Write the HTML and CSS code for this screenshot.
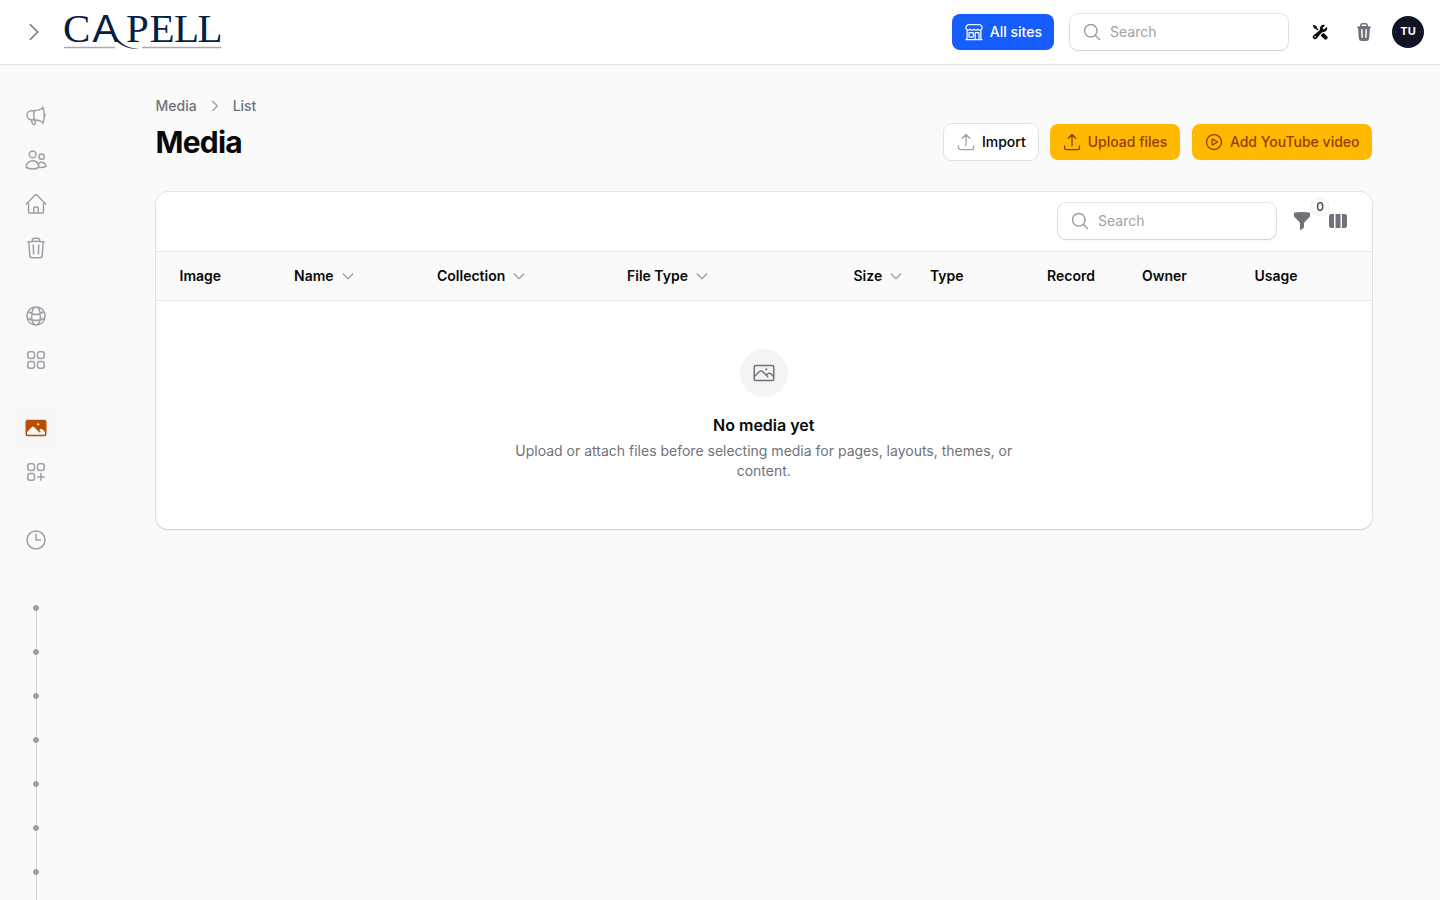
FILE: index.html
```html
<!DOCTYPE html>
<html lang="en">
<head>
    <meta charset="utf-8">
    <title>Media - Capell</title>
    <link rel="stylesheet" href="styles.css">
</head>
<body>
    <header class="topbar">
        <button class="icon-btn expand" aria-label="Expand sidebar">
            <svg class="icon lg" viewBox="0 0 24 24"><path d="m8.25 4.5 7.5 7.5-7.5 7.5"/></svg>
        </button>
        <a class="logo" href="#">
            <svg width="164" height="40" viewBox="0 0 164 40">
                <text y="30" x="0">C</text>
                <text y="30" x="29.500" class="logo-a">A</text>
                <text y="30" x="63 86.500 111 134.500">PELL</text>
                <path class="swoosh" d="M50 18.500c5 11 11 17.500 26 18.500-13 .5-21.500-5-27.500-14z"/>
                <path class="rule" d="M1 35.500h51M79 35.500h79.500"/>
            </svg>
        </a>
        <div class="topbar-end">
            <a class="btn blue" href="#">
                <svg class="icon" viewBox="0 0 24 24"><path d="M13.500 21v-7.500a.75.75 0 0 1 .75-.75h3a.75.75 0 0 1 .75.75V21m-4.500 0H2.360m11.140 0H18m0 0h3.640m-1.390 0V9.349M3.750 21V9.349m0 0a3.001 3.001 0 0 0 3.750-.615A2.993 2.993 0 0 0 9.750 9.750c.896 0 1.700-.393 2.250-1.016a2.993 2.993 0 0 0 2.250 1.016c.896 0 1.700-.393 2.250-1.015a3.001 3.001 0 0 0 3.750.614m-16.500 0a3.004 3.004 0 0 1-.621-4.720l1.189-1.190A1.500 1.500 0 0 1 5.378 3h13.243a1.500 1.500 0 0 1 1.060.440l1.190 1.189a3 3 0 0 1-.621 4.720M6.750 18h3.750a.75.75 0 0 0 .75-.75V13.500a.75.75 0 0 0-.75-.75H6.750a.75.75 0 0 0-.75.75v3.750c0 .414.336.75.75.75Z"/></svg>
                All sites
            </a>
            <label class="search">
                <svg class="icon" viewBox="0 0 24 24"><path d="m21 21-5.197-5.197m0 0A7.500 7.500 0 1 0 5.196 5.196a7.500 7.500 0 0 0 10.607 10.607Z"/></svg>
                <input type="text" placeholder="Search">
            </label>
            <div class="tools">
                <svg class="icon solid sm" viewBox="0 0 20 20"><path fill-rule="evenodd" d="M14.500 10a4.500 4.500 0 0 0 4.284-5.882c-.105-.324-.51-.391-.752-.15L15.340 6.660a.454.454 0 0 1-.493.11 3.010 3.010 0 0 1-1.618-1.616.455.455 0 0 1 .11-.494l2.694-2.692c.24-.241.174-.647-.15-.752a4.500 4.500 0 0 0-5.873 4.575c.055.873-.128 1.808-.8 2.368l-7.230 6.024a2.724 2.724 0 1 0 3.837 3.837l6.024-7.230c.56-.672 1.495-.855 2.368-.8.096.007.193.01.291.01ZM5 16a1 1 0 1 1-2 0 1 1 0 0 1 2 0Z"/><path d="M14.500 11.500c.173 0 .345-.007.514-.022l3.754 3.754a2.500 2.500 0 0 1-3.536 3.536l-4.410-4.410 2.172-2.607c.052-.063.147-.138.342-.196.202-.06.469-.087.777-.067.128.008.257.012.387.012ZM6 4.586l2.330 2.330a.452.452 0 0 1-.08.09L6.800 8.214 4.586 6H3.309a.5.5 0 0 1-.447-.276l-1.700-3.402a.5.5 0 0 1 .093-.577l.49-.49a.5.5 0 0 1 .577-.094l3.402 1.700A.5.5 0 0 1 6 3.310v1.277Z"/></svg>
                <svg class="icon solid muted" viewBox="0 0 20 20"><path fill-rule="evenodd" d="M8.750 1A2.750 2.750 0 0 0 6 3.750v.443c-.795.077-1.584.176-2.365.298a.75.75 0 1 0 .23 1.482l.149-.022.841 10.518A2.750 2.750 0 0 0 7.596 19h4.807a2.750 2.750 0 0 0 2.742-2.530l.841-10.520.149.023a.75.75 0 0 0 .23-1.482A41.030 41.030 0 0 0 14 4.193V3.750A2.750 2.750 0 0 0 11.250 1h-2.500ZM10 4c.84 0 1.673.025 2.500.075V3.750c0-.69-.56-1.250-1.250-1.250h-2.500c-.69 0-1.250.56-1.250 1.250v.325C8.327 4.025 9.160 4 10 4ZM8.580 7.720a.75.75 0 0 0-1.500.06l.3 7.500a.75.75 0 1 0 1.500-.06l-.3-7.500Zm4.340.06a.75.75 0 1 0-1.500-.06l-.3 7.500a.75.75 0 1 0 1.500.06l.3-7.500Z"/></svg>
            </div>
            <span class="avatar">TU</span>
        </div>
    </header>

    <div class="layout">
        <nav class="sidebar">
            <div class="group">
                <a href="#"><svg class="icon lg" viewBox="0 0 24 24"><path d="M10.340 15.840c-.688-.06-1.386-.09-2.090-.09H7.500a4.500 4.500 0 1 1 0-9h.75c.704 0 1.402-.03 2.090-.09m0 9.180c.253.962.584 1.892.985 2.783.247.55.06 1.210-.463 1.511l-.657.38c-.551.318-1.260.117-1.527-.461a20.845 20.845 0 0 1-1.440-4.282m3.102.069a18.030 18.030 0 0 1-.59-4.590c0-1.586.205-3.124.59-4.590m0 9.180a23.848 23.848 0 0 1 8.835 2.535M10.340 6.660a23.847 23.847 0 0 0 8.835-2.535m0 0A23.740 23.740 0 0 0 18.795 3m.38 1.125a23.910 23.910 0 0 1 1.014 5.395m-1.014 8.855c-.118.38-.245.754-.38 1.125m.38-1.125a23.910 23.910 0 0 0 1.014-5.395m0-3.460c.495.413.811 1.035.811 1.730 0 .695-.316 1.317-.811 1.730m0-3.460a24.347 24.347 0 0 1 0 3.460"/></svg></a>
                <a href="#"><svg class="icon lg" viewBox="0 0 24 24"><path d="M15 19.128a9.380 9.380 0 0 0 2.625.372 9.337 9.337 0 0 0 4.121-.952 4.125 4.125 0 0 0-7.533-2.493M15 19.128v-.003c0-1.113-.285-2.160-.786-3.070M15 19.128v.106A12.318 12.318 0 0 1 8.624 21c-2.331 0-4.512-.645-6.374-1.766l-.001-.109a6.375 6.375 0 0 1 11.964-3.070M12 6.375a3.375 3.375 0 1 1-6.750 0 3.375 3.375 0 0 1 6.750 0Zm8.250 2.250a2.625 2.625 0 1 1-5.250 0 2.625 2.625 0 0 1 5.250 0Z"/></svg></a>
                <a href="#"><svg class="icon lg" viewBox="0 0 24 24"><path d="m2.250 12 8.954-8.955c.44-.439 1.152-.439 1.591 0L21.750 12M4.500 9.750v10.125c0 .621.504 1.125 1.125 1.125H9.750v-4.875c0-.621.504-1.125 1.125-1.125h2.250c.621 0 1.125.504 1.125 1.125V21h4.125c.621 0 1.125-.504 1.125-1.125V9.750M8.250 21h8.250"/></svg></a>
                <a href="#"><svg class="icon lg" viewBox="0 0 24 24"><path d="m14.740 9-.346 9m-4.788 0L9.260 9m9.968-3.210c.342.052.682.107 1.022.166m-1.022-.165L18.160 19.673a2.250 2.250 0 0 1-2.244 2.077H8.084a2.250 2.250 0 0 1-2.244-2.077L4.772 5.790m14.456 0a48.108 48.108 0 0 0-3.478-.397m-12 .562c.34-.059.68-.114 1.022-.165m0 0a48.110 48.110 0 0 1 3.478-.397m7.500 0v-.916c0-1.180-.91-2.164-2.090-2.201a51.964 51.964 0 0 0-3.320 0c-1.180.037-2.090 1.022-2.090 2.201v.916m7.500 0a48.667 48.667 0 0 0-7.500 0"/></svg></a>
            </div>
            <div class="group">
                <a href="#"><svg class="icon lg" viewBox="0 0 24 24"><path d="M12 21a9.004 9.004 0 0 0 8.716-6.747M12 21a9.004 9.004 0 0 1-8.716-6.747M12 21c2.485 0 4.500-4.030 4.500-9S14.485 3 12 3m0 18c-2.485 0-4.500-4.030-4.500-9S9.515 3 12 3m0 0a8.997 8.997 0 0 1 7.843 4.582M12 3a8.997 8.997 0 0 0-7.843 4.582m15.686 0A11.953 11.953 0 0 1 12 10.500c-2.998 0-5.740-1.100-7.843-2.918m15.686 0A8.959 8.959 0 0 1 21 12c0 .778-.099 1.533-.284 2.253m0 0A17.919 17.919 0 0 1 12 16.500c-3.162 0-6.133-.815-8.716-2.247m0 0A9.015 9.015 0 0 1 3 12c0-1.605.42-3.113 1.157-4.418"/></svg></a>
                <a href="#"><svg class="icon lg" viewBox="0 0 24 24"><rect x="3.750" y="3.750" width="6.750" height="6.750" rx="2.200"/><rect x="13.500" y="3.750" width="6.750" height="6.750" rx="2.200"/><rect x="3.750" y="13.500" width="6.750" height="6.750" rx="2.200"/><rect x="13.500" y="13.500" width="6.750" height="6.750" rx="2.200"/></svg></a>
            </div>
            <div class="group">
                <a href="#" class="active"><svg class="icon solid lg" viewBox="0 0 24 24"><path fill-rule="evenodd" d="M1.500 6a2.250 2.250 0 0 1 2.250-2.250h16.500A2.250 2.250 0 0 1 22.500 6v12a2.250 2.250 0 0 1-2.250 2.250H3.750A2.250 2.250 0 0 1 1.500 18V6ZM3 16.060V18c0 .414.336.75.75.75h16.500A.75.75 0 0 0 21 18v-1.940l-2.690-2.689a1.500 1.500 0 0 0-2.120 0l-.88.879.97.97a.75.75 0 1 1-1.060 1.060l-5.160-5.159a1.500 1.500 0 0 0-2.120 0L3 16.061Zm10.125-7.810a1.125 1.125 0 1 1 2.250 0 1.125 1.125 0 0 1-2.250 0Z"/></svg></a>
                <a href="#"><svg class="icon lg" viewBox="0 0 24 24"><rect x="3.750" y="3.750" width="6.750" height="6.750" rx="2.200"/><rect x="13.500" y="3.750" width="6.750" height="6.750" rx="2.200"/><rect x="3.750" y="13.500" width="6.750" height="6.750" rx="2.200"/><path d="M13.500 16.875h6.750M16.875 13.500v6.750"/></svg></a>
            </div>
            <div class="group">
                <a href="#"><svg class="icon lg" viewBox="0 0 24 24"><path d="M12 6v6h4.500m4.500 0a9 9 0 1 1-18 0 9 9 0 0 1 18 0Z"/></svg></a>
            </div>
            <div class="group dots">
                <a href="#"></a>
                <a href="#"></a>
                <a href="#"></a>
                <a href="#"></a>
                <a href="#"></a>
                <a href="#"></a>
                <a href="#"></a>
                <a href="#"></a>
            </div>
        </nav>

        <main>
            <div class="page-header">
                <div>
                    <div class="breadcrumbs">
                        <a href="#">Media</a>
                        <svg class="icon sm" viewBox="0 0 24 24"><path d="m8.500 5 7 7-7 7"/></svg>
                        <span>List</span>
                    </div>
                    <h1>Media</h1>
                </div>
                <div class="actions">
                    <button class="btn white">
                        <svg class="icon" viewBox="0 0 24 24"><path d="M3 16.500v2.250A2.250 2.250 0 0 0 5.250 21h13.500A2.250 2.250 0 0 0 21 18.750V16.500m-13.500-9L12 3m0 0 4.500 4.500M12 3v13.500"/></svg>
                        Import
                    </button>
                    <button class="btn amber">
                        <svg class="icon" viewBox="0 0 24 24"><path d="M3 16.500v2.250A2.250 2.250 0 0 0 5.250 21h13.500A2.250 2.250 0 0 0 21 18.750V16.500m-13.500-9L12 3m0 0 4.500 4.500M12 3v13.500"/></svg>
                        Upload files
                    </button>
                    <button class="btn amber">
                        <svg class="icon" viewBox="0 0 24 24"><path d="M21 12a9 9 0 1 1-18 0 9 9 0 0 1 18 0Z"/><path d="M15.910 11.672a.375.375 0 0 1 0 .656l-5.603 3.113a.375.375 0 0 1-.557-.328V8.887c0-.286.307-.466.557-.327l5.603 3.112Z"/></svg>
                        Add YouTube video
                    </button>
                </div>
            </div>

            <section class="card">
                <div class="toolbar">
                    <label class="search">
                        <svg class="icon" viewBox="0 0 24 24"><path d="m21 21-5.197-5.197m0 0A7.500 7.500 0 1 0 5.196 5.196a7.500 7.500 0 0 0 10.607 10.607Z"/></svg>
                        <input type="text" placeholder="Search">
                    </label>
                    <button class="icon-btn filter">
                        <svg class="icon solid muted" viewBox="0 0 20 20"><path d="M2.628 1.601C5.028 1.206 7.490 1 10 1s4.973.206 7.372.601a.75.75 0 0 1 .628.74v2.288a2.250 2.250 0 0 1-.659 1.590l-4.682 4.683a2.250 2.250 0 0 0-.659 1.590v3.037c0 .684-.31 1.330-.844 1.757l-1.937 1.550A.75.75 0 0 1 8 18.250v-5.757a2.250 2.250 0 0 0-.659-1.591L2.659 6.220A2.250 2.250 0 0 1 2 4.629V2.340a.75.75 0 0 1 .628-.74Z"/></svg>
                        <span class="badge">0</span>
                    </button>
                    <button class="icon-btn">
                        <svg class="icon solid muted" viewBox="0 0 20 20"><path d="M14 17h2.750A2.250 2.250 0 0 0 19 14.750v-9.500A2.250 2.250 0 0 0 16.750 3H14v14ZM12.500 3h-5v14h5V3ZM3.250 3H6v14H3.250A2.250 2.250 0 0 1 1 14.750v-9.500A2.250 2.250 0 0 1 3.250 3Z"/></svg>
                    </button>
                </div>
                <div class="columns">
                    <div>Image</div>
                    <div>Name <svg class="icon sm" viewBox="0 0 24 24"><path d="m19 9-7 7-7-7"/></svg></div>
                    <div>Collection <svg class="icon sm" viewBox="0 0 24 24"><path d="m19 9-7 7-7-7"/></svg></div>
                    <div>File Type <svg class="icon sm" viewBox="0 0 24 24"><path d="m19 9-7 7-7-7"/></svg></div>
                    <div>Size <svg class="icon sm" viewBox="0 0 24 24"><path d="m19 9-7 7-7-7"/></svg></div>
                    <div>Type</div>
                    <div>Record</div>
                    <div>Owner</div>
                    <div>Usage</div>
                </div>
                <div class="empty">
                    <div class="empty-icon">
                        <svg class="icon lg" viewBox="0 0 24 24"><path d="m2.250 15.750 5.159-5.159a2.250 2.250 0 0 1 3.182 0l5.159 5.159m-1.500-1.500 1.409-1.409a2.250 2.250 0 0 1 3.182 0l2.909 2.909m-18 3.750h16.500a1.500 1.500 0 0 0 1.500-1.500V6a1.500 1.500 0 0 0-1.500-1.500H3.750A1.500 1.500 0 0 0 2.250 6v12a1.500 1.500 0 0 0 1.500 1.500Zm10.500-11.250h.008v.008h-.008V8.250Zm.375 0a.375.375 0 1 1-.75 0 .375.375 0 0 1 .75 0Z"/></svg>
                    </div>
                    <h2>No media yet</h2>
                    <p>Upload or attach files before selecting media for pages, layouts, themes, or content.</p>
                </div>
            </section>
        </main>
    </div>
</body>
</html>
```

FILE: styles.css
```css
* {
    box-sizing: border-box;
}
body {
    margin: 0;
    height: 100vh;
    overflow: hidden;
    background: #fafafa;
    color: #09090b;
    font: 14px/20px Inter, sans-serif;
}
a {
    color: inherit;
    text-decoration: none;
}
button, input {
    font: inherit;
    border: 0;
    padding: 0;
    background: none;
}

.icon {
    display: block;
    flex: none;
    width: 20px;
    height: 20px;
    fill: none;
    stroke: currentColor;
    stroke-width: 1.5;
    stroke-linecap: round;
    stroke-linejoin: round;
}
.icon.sm {
    width: 16px;
    height: 16px;
    stroke-width: 2;
}
.icon.lg {
    width: 24px;
    height: 24px;
}
.icon.solid {
    fill: currentColor;
    stroke: none;
}
.muted {
    color: #71717b;
}

/* Top bar */
.topbar {
    display: flex;
    align-items: center;
    height: 64px;
    padding: 0 16px;
    background: #fff;
    box-shadow: 0 0 0 1px rgba(9, 9, 11, .05), 0 1px 2px rgba(0, 0, 0, .05);
}
.icon-btn {
    display: flex;
    align-items: center;
    justify-content: center;
    width: 36px;
    height: 36px;
    color: #71717b;
}
.logo {
    margin-left: 11px;
}
.logo svg {
    display: block;
}
.logo text {
    font: 41px "Liberation Serif", serif;
    fill: #04213f;
}
.logo .logo-a {
    font: 39px "Liberation Sans", sans-serif;
}
.swoosh {
    fill: #04213f;
}
.rule {
    stroke: #a3adc2;
    stroke-width: 1.5;
}
.topbar-end {
    display: flex;
    align-items: center;
    margin-left: auto;
}
.topbar-end .search {
    margin-left: 16px;
}
.tools {
    display: flex;
    align-items: center;
    gap: 26px;
    margin: 0 18px 0 24px;
}
.avatar {
    width: 32px;
    height: 32px;
    border-radius: 50%;
    background: #0f1524;
    color: #fff;
    font-size: 11px;
    font-weight: 700;
    line-height: 31px;
    text-align: center;
}

.btn {
    display: flex;
    align-items: center;
    gap: 6px;
    height: 36px;
    padding: 0 12px;
    border-radius: 8px;
    font-weight: 500;
}
.btn.blue {
    background: #155dfc;
    color: #fff;
}
.btn.white {
    background: #fff;
    box-shadow: 0 0 0 1px rgba(9, 9, 11, .1);
}
.btn.white .icon {
    color: #9f9fa9;
}
.btn.amber {
    padding-right: 12.5px;
    background: #ffb900;
    color: #973c00;
}

.search {
    display: flex;
    align-items: center;
    gap: 8px;
    width: 218px;
    height: 36px;
    padding: 0 12px;
    border-radius: 8px;
    background: #fff;
    color: #9f9fa9;
    box-shadow: 0 0 0 1px rgba(9, 9, 11, .1), 0 1px 2px rgba(0, 0, 0, .1);
}
.search .icon {
    stroke-width: 1.8;
}
.search input {
    width: 100%;
    min-width: 0;
}
.search input::placeholder {
    color: #9f9fa9;
}

/* Sidebar */
.layout {
    display: flex;
}
.sidebar {
    display: flex;
    flex-direction: column;
    gap: 28px;
    flex: none;
    width: 72px;
    height: 836px;
    overflow: hidden;
    padding: 32px 16px 0;
}
.group {
    display: flex;
    flex-direction: column;
    flex: none;
    gap: 4px;
}
.group a {
    display: flex;
    align-items: center;
    justify-content: center;
    width: 40px;
    height: 40px;
    border-radius: 8px;
    color: #9f9fa9;
}
.group .active {
    background: #f7f7f7;
    color: #bb4d00;
}
.dots {
    gap: 0;
}
.dots a {
    height: 44px;
    border-radius: 0;
    background:
        radial-gradient(circle, #9f9fa9 2.6px, transparent 3.2px) center / 8px 8px no-repeat,
        linear-gradient(#d4d4d8, #d4d4d8) 20px 0 / 1px 100% no-repeat;
}
.dots a:first-child {
    height: 42px;
    background:
        radial-gradient(circle, #9f9fa9 2.6px, transparent 3.2px) center 16px / 8px 8px no-repeat,
        linear-gradient(#d4d4d8, #d4d4d8) 20px 20px / 1px 100% no-repeat;
}

/* Page */
main {
    flex: 1;
    padding: 32px 68px 0 83.5px;
}
.page-header {
    display: flex;
    align-items: flex-end;
    justify-content: space-between;
}
.breadcrumbs {
    display: flex;
    align-items: center;
    gap: 10px;
    margin-bottom: 8px;
    color: #71717b;
    font-weight: 500;
}
.breadcrumbs .icon {
    color: #9f9fa9;
}
h1 {
    margin: 0;
    font-size: 30px;
    line-height: 36px;
    font-weight: 700;
    letter-spacing: -.75px;
}
.actions {
    display: flex;
    gap: 12px;
}

.card {
    margin-top: 32px;
    border-radius: 12px;
    background: #fff;
    box-shadow: 0 0 0 1px rgba(9, 9, 11, .07), 0 1px 2px rgba(0, 0, 0, .12);
}
.toolbar {
    display: flex;
    align-items: center;
    justify-content: flex-end;
    height: 59px;
    padding: 0 16px 1px;
}
.toolbar .search {
    margin-right: 8px;
}
.filter {
    position: relative;
}
.badge {
    position: absolute;
    top: -4px;
    right: -8px;
    width: 16px;
    height: 16px;
    border-radius: 6px;
    background: #fafafa;
    box-shadow: 0 0 0 1px rgba(9, 9, 11, .06);
    color: #3f3f46;
    font-size: 12px;
    font-weight: 500;
    line-height: 16px;
    text-align: center;
}
.columns {
    display: grid;
    grid-template-columns: 126.5px 143px 190px 226.5px 76.5px 117px 95px 112.5px 1fr;
    height: 50px;
    border-top: 1px solid #e4e4e7;
    border-bottom: 1px solid #e4e4e7;
    background: #fafafa;
    font-weight: 600;
}
.columns div {
    display: flex;
    align-items: center;
    gap: 6px;
    padding-left: 12px;
}
.columns div:first-child {
    padding-left: 24px;
}
.columns .icon {
    color: #9f9fa9;
}

.empty {
    display: flex;
    flex-direction: column;
    align-items: center;
    padding: 48px 24px;
    text-align: center;
}
.empty-icon {
    padding: 12px;
    border-radius: 50%;
    background: #f4f4f5;
    color: #71717b;
}
h2 {
    margin: 16px 0 0;
    font-size: 16px;
    line-height: 24px;
    font-weight: 600;
}
.empty p {
    max-width: 512px;
    margin: 4px 0 0;
    color: #71717b;
}
```
